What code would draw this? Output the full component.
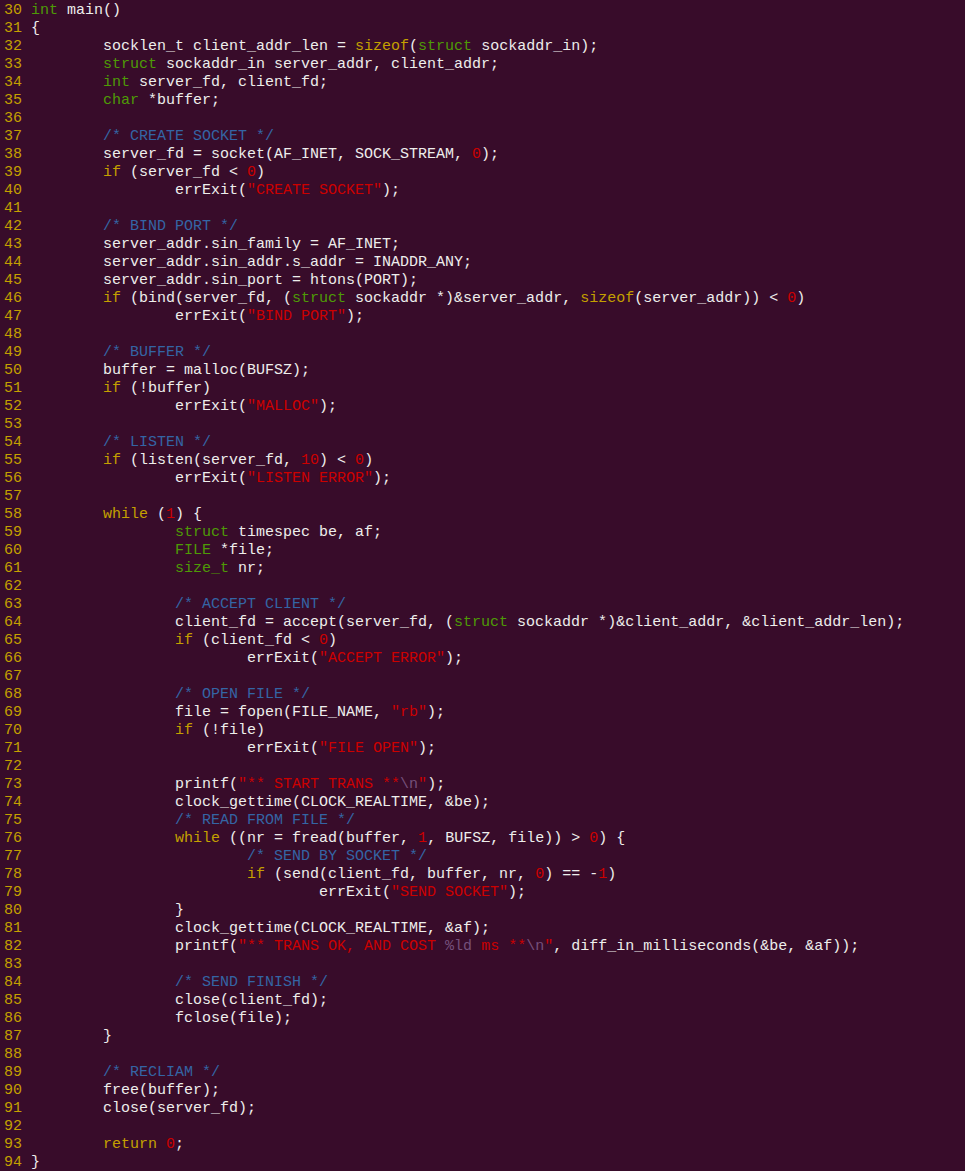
import React from "react";

type Kind = "plain" | "type" | "stmt" | "comment" | "str" | "special" | "lnr";

const colors: Record<Kind, string> = {
  plain: "text-[#eeeeec]",
  type: "text-[#4e9a06]",
  stmt: "text-[#c4a000]",
  comment: "text-[#3465a4]",
  str: "text-[#cc0000]",
  special: "text-[#75507b]",
  lnr: "text-[#c4a000]",
};

const TYPES = new Set(["int", "char", "struct", "size_t", "FILE"]);
const STMTS = new Set(["if", "while", "return", "sizeof"]);

const source = [
  "int main()",
  "{",
  "\tsocklen_t client_addr_len = sizeof(struct sockaddr_in);",
  "\tstruct sockaddr_in server_addr, client_addr;",
  "\tint server_fd, client_fd;",
  "\tchar *buffer;",
  "",
  "\t/* CREATE SOCKET */",
  "\tserver_fd = socket(AF_INET, SOCK_STREAM, 0);",
  "\tif (server_fd < 0)",
  '\t\terrExit("CREATE SOCKET");',
  "",
  "\t/* BIND PORT */",
  "\tserver_addr.sin_family = AF_INET;",
  "\tserver_addr.sin_addr.s_addr = INADDR_ANY;",
  "\tserver_addr.sin_port = htons(PORT);",
  "\tif (bind(server_fd, (struct sockaddr *)&server_addr, sizeof(server_addr)) < 0)",
  '\t\terrExit("BIND PORT");',
  "",
  "\t/* BUFFER */",
  "\tbuffer = malloc(BUFSZ);",
  "\tif (!buffer)",
  '\t\terrExit("MALLOC");',
  "",
  "\t/* LISTEN */",
  "\tif (listen(server_fd, 10) < 0)",
  '\t\terrExit("LISTEN ERROR");',
  "",
  "\twhile (1) {",
  "\t\tstruct timespec be, af;",
  "\t\tFILE *file;",
  "\t\tsize_t nr;",
  "",
  "\t\t/* ACCEPT CLIENT */",
  "\t\tclient_fd = accept(server_fd, (struct sockaddr *)&client_addr, &client_addr_len);",
  "\t\tif (client_fd < 0)",
  '\t\t\terrExit("ACCEPT ERROR");',
  "",
  "\t\t/* OPEN FILE */",
  '\t\tfile = fopen(FILE_NAME, "rb");',
  "\t\tif (!file)",
  '\t\t\terrExit("FILE OPEN");',
  "",
  '\t\tprintf("** START TRANS **\\n");',
  "\t\tclock_gettime(CLOCK_REALTIME, &be);",
  "\t\t/* READ FROM FILE */",
  "\t\twhile ((nr = fread(buffer, 1, BUFSZ, file)) > 0) {",
  "\t\t\t/* SEND BY SOCKET */",
  "\t\t\tif (send(client_fd, buffer, nr, 0) == -1)",
  '\t\t\t\terrExit("SEND SOCKET");',
  "\t\t}",
  "\t\tclock_gettime(CLOCK_REALTIME, &af);",
  '\t\tprintf("** TRANS OK, AND COST %ld ms **\\n", diff_in_milliseconds(&be, &af));',
  "",
  "\t\t/* SEND FINISH */",
  "\t\tclose(client_fd);",
  "\t\tfclose(file);",
  "\t}",
  "",
  "\t/* RECLIAM */",
  "\tfree(buffer);",
  "\tclose(server_fd);",
  "",
  "\treturn 0;",
  "}",
];

type Tok = { t: string; k: Kind };

// tiny C highlighter, vim default colours
function tokenize(raw: string): Tok[] {
  const line = raw.replace(/\t/g, "        ");
  const out: Tok[] = [];
  let i = 0;
  const push = (t: string, k: Kind) => {
    const last = out[out.length - 1];
    if (last && last.k === k) last.t += t;
    else out.push({ t, k });
  };
  while (i < line.length) {
    const ch = line[i];
    if (line.startsWith("/*", i)) {
      const end = line.indexOf("*/", i + 2);
      const stop = end < 0 ? line.length : end + 2;
      push(line.slice(i, stop), "comment");
      i = stop;
    } else if (ch === '"') {
      push('"', "str");
      i++;
      while (i < line.length && line[i] !== '"') {
        if (line[i] === "\\") {
          push(line.slice(i, i + 2), "special");
          i += 2;
        } else if (line[i] === "%") {
          const m = /^%[a-z]+/.exec(line.slice(i));
          const s = m ? m[0] : "%";
          push(s, "special");
          i += s.length;
        } else {
          push(line[i], "str");
          i++;
        }
      }
      if (i < line.length) {
        push('"', "str");
        i++;
      }
    } else if (/[A-Za-z_]/.test(ch)) {
      const m = /^[A-Za-z_]\w*/.exec(line.slice(i))!;
      const w = m[0];
      push(w, TYPES.has(w) ? "type" : STMTS.has(w) ? "stmt" : "plain");
      i += w.length;
    } else if (/\d/.test(ch)) {
      const m = /^\d+/.exec(line.slice(i))!;
      push(m[0], "str");
      i += m[0].length;
    } else {
      push(ch, "plain");
      i++;
    }
  }
  return out;
}

export default function App() {
  return (
    <div className="min-h-screen bg-[#380c2a] pl-[4px] pt-[2px] font-['Liberation_Mono',monospace] text-[15px]">
      {source.map((line, idx) => (
        <div key={idx} className="h-[18px] leading-[18px] whitespace-pre">
          <span className={colors.lnr}>{`${30 + idx} `}</span>
          {tokenize(line).map((tok, j) => (
            <span key={j} className={colors[tok.k]}>
              {tok.t}
            </span>
          ))}
        </div>
      ))}
    </div>
  );
}
